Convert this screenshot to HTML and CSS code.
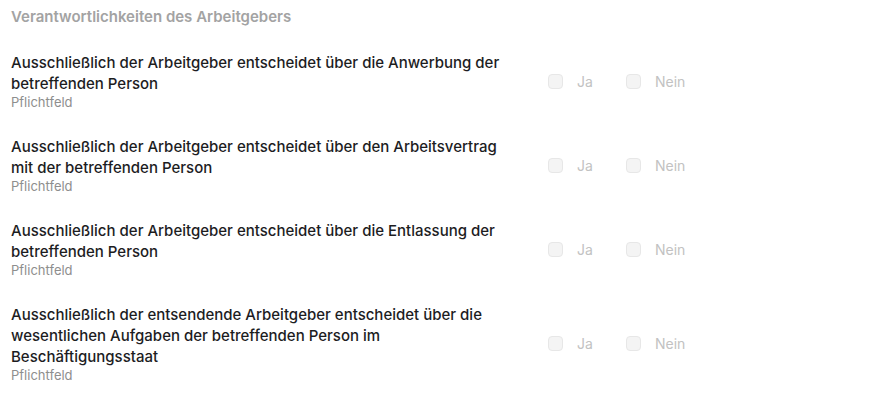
FILE: index.html
```html
<!DOCTYPE html>
<html lang="de">
<head>
    <meta charset="UTF-8">
    <meta name="viewport" content="width=device-width, initial-scale=1.0">
    <title>Verantwortlichkeiten des Arbeitgebers</title>
    <link rel="stylesheet" href="styles.css">
</head>
<body>
    <div class="section">
        <h2 class="section-title">Verantwortlichkeiten des Arbeitgebers</h2>

        <div class="question">
            <div class="question-text">
                <div class="label">Ausschließlich der Arbeitgeber entscheidet über die Anwerbung der betreffenden Person</div>
                <div class="hint">Pflichtfeld</div>
            </div>
            <div class="options">
                <label class="option"><span class="box"></span>Ja</label>
                <label class="option"><span class="box"></span>Nein</label>
            </div>
        </div>

        <div class="question">
            <div class="question-text">
                <div class="label">Ausschließlich der Arbeitgeber entscheidet über den Arbeitsvertrag mit der betreffenden Person</div>
                <div class="hint">Pflichtfeld</div>
            </div>
            <div class="options">
                <label class="option"><span class="box"></span>Ja</label>
                <label class="option"><span class="box"></span>Nein</label>
            </div>
        </div>

        <div class="question">
            <div class="question-text">
                <div class="label">Ausschließlich der Arbeitgeber entscheidet über die Entlassung der betreffenden Person</div>
                <div class="hint">Pflichtfeld</div>
            </div>
            <div class="options">
                <label class="option"><span class="box"></span>Ja</label>
                <label class="option"><span class="box"></span>Nein</label>
            </div>
        </div>

        <div class="question">
            <div class="question-text">
                <div class="label">Ausschließlich der entsendende Arbeitgeber entscheidet über die wesentlichen Aufgaben der betreffenden Person im Beschäftigungsstaat</div>
                <div class="hint">Pflichtfeld</div>
            </div>
            <div class="options">
                <label class="option"><span class="box"></span>Ja</label>
                <label class="option"><span class="box"></span>Nein</label>
            </div>
        </div>
    </div>
</body>
</html>
```

FILE: styles.css
```css
/* Grundlayout */
body {
    margin: 0;
    background-color: #fff;
    font-family: 'Inter', 'Noto Sans', sans-serif;
    color: #1d1d1f;
}

.section {
    padding: 7px 11px 0 11px;
}

.section-title {
    margin: 0 0 25px 0;
    font-size: 15px;
    line-height: 20px;
    font-weight: 600;
    color: #a3a3a3;
}

.question {
    display: flex;
    align-items: center;
    margin-bottom: 26px;
}

.question-text {
    width: 510px;
    margin-right: 27px;
}

.label {
    font-size: 15px;
    line-height: 21px;
    font-weight: 500;
}

.hint {
    font-size: 13px;
    line-height: 16px;
    color: #8e8e8e;
}

.options {
    display: flex;
}

.option {
    display: flex;
    align-items: center;
    width: 78px;
    font-size: 14px;
    color: #c2c2c2;
}

.box {
    width: 13px;
    height: 13px;
    margin-right: 14px;
    border: 1px solid #e7e7e7;
    border-radius: 4px;
    background-color: #f4f4f4;
}
```
